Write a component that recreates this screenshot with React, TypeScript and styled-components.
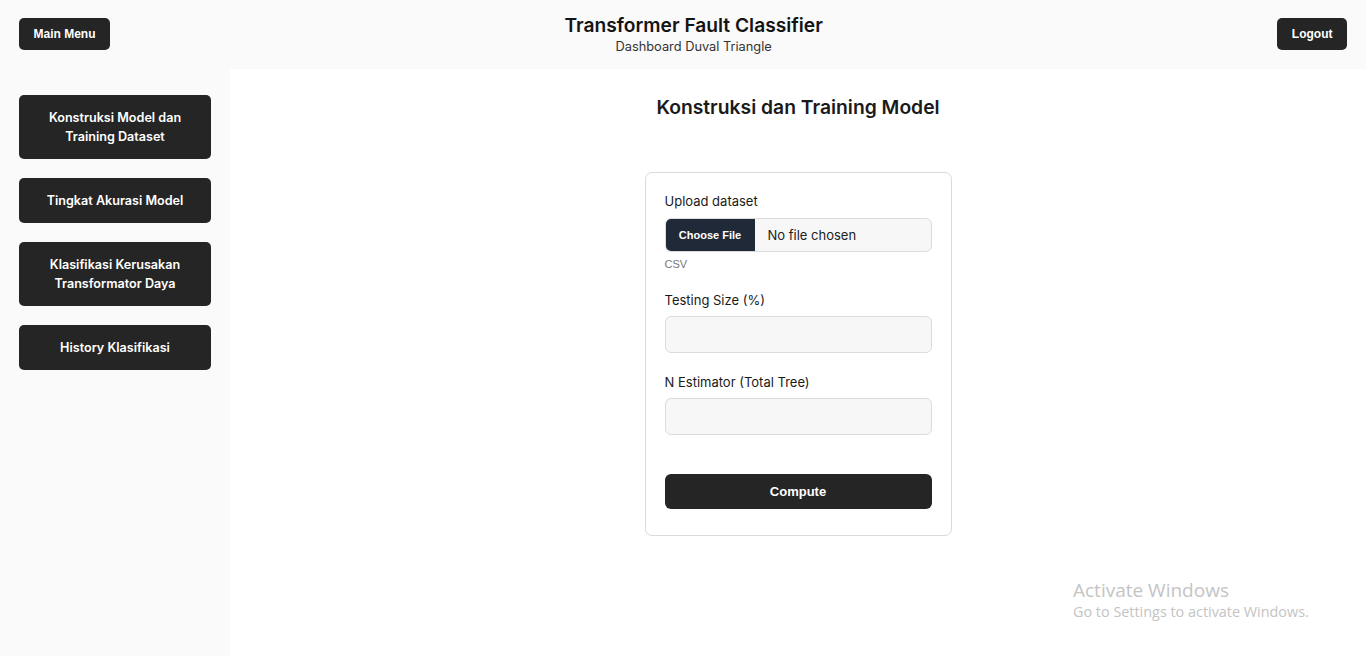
import React from "react";
import styled, { createGlobalStyle } from "styled-components";

const Global = createGlobalStyle`
  html, body { margin: 0; padding: 0; background: #fafafa; }
  body { font-family: Inter, "Noto Sans", sans-serif; color: #1a1a1a; }
  * { box-sizing: border-box; }
`;

const Page = styled.div`
  width: 1366px;
  height: 656px;
  display: flex;
  flex-direction: column;
  overflow: hidden;
  position: relative;
`;

const Header = styled.header`
  height: 69px;
  flex: none;
  background: #fafafa;
  display: flex;
  justify-content: space-between;
  align-items: flex-start;
  padding: 0 19px;
`;

const HeaderButton = styled.button`
  margin-top: 18px;
  height: 32px;
  padding: 0 14.5px;
  border: none;
  border-radius: 5px;
  background: #252525;
  color: #fff;
  font-family: "Liberation Sans", Arial, sans-serif;
  font-weight: 700;
  font-size: 12px;
`;

const TitleBlock = styled.div`
  display: flex;
  flex-direction: column;
  align-items: center;
  padding-top: 12px;
`;

const Title = styled.h1`
  margin: 0;
  font-size: 19.2px;
  font-weight: 600;
  line-height: 26px;
  color: #141414;
`;

const Subtitle = styled.div`
  font-size: 12.8px;
  line-height: 18px;
  color: #333;
`;

const Body = styled.div`
  flex: 1;
  display: flex;
`;

const Sidebar = styled.nav`
  width: 230px;
  flex: none;
  background: #fafafa;
  padding: 26px 19px;
  display: flex;
  flex-direction: column;
  gap: 19px;
`;

const NavButton = styled.button`
  width: 192px;
  border: none;
  border-radius: 5px;
  background: #252525;
  color: #fff;
  font-family: Inter, "Noto Sans", sans-serif;
  font-weight: 600;
  font-size: 12.6px;
  line-height: 19px;
  padding: 13px 22px;
  text-align: center;
`;

const Main = styled.main`
  flex: 1;
  background: #fff;
  display: flex;
  flex-direction: column;
  align-items: center;
  padding-top: 26px;
`;

const Heading = styled.h2`
  margin: 0;
  font-size: 19.3px;
  font-weight: 600;
  line-height: 24px;
  color: #1a1a1a;
`;

const Card = styled.form`
  margin-top: 53px;
  width: 307px;
  border: 1px solid #dadada;
  border-radius: 7px;
  padding: 19px 19px 26px 19px;
  display: flex;
  flex-direction: column;
`;

const Label = styled.label<{ $top?: number; $bottom?: number }>`
  font-size: 13px;
  line-height: 18px;
  color: #1a1a1a;
  margin-top: ${(p) => p.$top ?? 0}px;
  margin-bottom: ${(p) => p.$bottom ?? 7}px;
`;

const FileBox = styled.div`
  height: 34px;
  border: 1px solid #dcdcdc;
  border-radius: 6px;
  background: #f7f7f7;
  display: flex;
  align-items: stretch;
  overflow: hidden;
`;

const FileButton = styled.span`
  width: 89px;
  background: #1f2937;
  color: #fff;
  font-family: "Liberation Sans", Arial, sans-serif;
  font-weight: 700;
  font-size: 11px;
  display: flex;
  align-items: center;
  justify-content: center;
`;

const FileText = styled.span`
  font-size: 13px;
  color: #222;
  display: flex;
  align-items: center;
  padding-left: 13px;
`;

const Hint = styled.div`
  font-family: "Liberation Sans", Arial, sans-serif;
  font-size: 11px;
  color: #777;
  margin-top: 6px;
`;

const Input = styled.input`
  height: 37px;
  border: 1px solid #dcdcdc;
  border-radius: 6px;
  background: #f7f7f7;
  width: 100%;
`;

const Compute = styled.button`
  margin-top: 39px;
  height: 35px;
  border: none;
  border-radius: 6px;
  background: #252525;
  color: #fff;
  font-family: "Liberation Sans", Arial, sans-serif;
  font-weight: 700;
  font-size: 13px;
`;

const Watermark = styled.div`
  position: absolute;
  left: 1073px;
  top: 578px;
  color: #c4c4c4;
  font-family: "Open Sans", "Noto Sans", sans-serif;
  pointer-events: none;
`;

const WmTitle = styled.div`
  font-size: 19px;
  line-height: 24px;
`;

const WmSub = styled.div`
  font-size: 14.4px;
  line-height: 20px;
`;

export default function App() {
  return (
    <Page>
      <Global />
      <Header>
        <HeaderButton>Main Menu</HeaderButton>
        <TitleBlock>
          <Title>Transformer Fault Classifier</Title>
          <Subtitle>Dashboard Duval Triangle</Subtitle>
        </TitleBlock>
        <HeaderButton>Logout</HeaderButton>
      </Header>
      <Body>
        <Sidebar>
          <NavButton>Konstruksi Model dan Training Dataset</NavButton>
          <NavButton>Tingkat Akurasi Model</NavButton>
          <NavButton>Klasifikasi Kerusakan Transformator Daya</NavButton>
          <NavButton>History Klasifikasi</NavButton>
        </Sidebar>
        <Main>
          <Heading>Konstruksi dan Training Model</Heading>
          <Card onSubmit={(e) => e.preventDefault()}>
            <Label $bottom={8}>Upload dataset</Label>
            <FileBox>
              <FileButton>Choose File</FileButton>
              <FileText>No file chosen</FileText>
            </FileBox>
            <Hint>CSV</Hint>
            <Label $top={21}>Testing Size (%)</Label>
            <Input />
            <Label $top={20}>N Estimator (Total Tree)</Label>
            <Input />
            <Compute type="submit">Compute</Compute>
          </Card>
        </Main>
      </Body>
      <Watermark>
        <WmTitle>Activate Windows</WmTitle>
        <WmSub>Go to Settings to activate Windows.</WmSub>
      </Watermark>
    </Page>
  );
}
